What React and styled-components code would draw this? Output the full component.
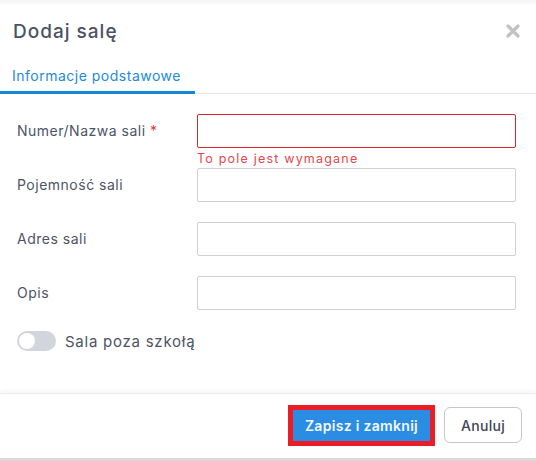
import React from 'react';
import styled, { createGlobalStyle } from 'styled-components';

const GlobalStyle = createGlobalStyle`
  html, body {
    margin: 0;
    padding: 0;
    background: #f4f4f6;
  }
  body {
    font-family: Inter, "Noto Sans", sans-serif;
  }
`;

const Page = styled.div`
  width: 536px;
  height: 461px;
  overflow: hidden;
  background: linear-gradient(#f5f5f5, #fbfbfb 4px);
  padding-top: 4px;
  box-sizing: border-box;
`;

const Modal = styled.div`
  background: #fff;
  height: 454px;
  display: flex;
  flex-direction: column;
  border-bottom: 3px solid #d9d9de;
`;

const Header = styled.div`
  display: flex;
  align-items: center;
  justify-content: space-between;
  padding: 14px 16px 0 13px;
  height: 26px;
`;

const Title = styled.h2`
  margin: 0;
  font-size: 19px;
  font-weight: 500;
  color: #4b5264;
  letter-spacing: 1px;
`;

const Close = styled.button`
  border: none;
  background: none;
  padding: 0;
  width: 14px;
  height: 14px;
  display: flex;
  cursor: pointer;
`;

const Tabs = styled.div`
  margin-top: 23px;
  display: flex;
  border-bottom: 1px solid #e6e6e8;
`;

const Tab = styled.div`
  box-sizing: border-box;
  width: 195px;
  padding: 0 0 7px 12px;
  white-space: nowrap;
  font-size: 14px;
  letter-spacing: 0.5px;
  color: ${p => (p.$active ? '#1d8bd8' : '#555')};
  border-bottom: 3px solid ${p => (p.$active ? '#1487d6' : 'transparent')};
  margin-bottom: -1px;
`;

const Form = styled.div`
  padding: 20px 20px 0 17px;
  display: flex;
  flex-direction: column;
  gap: 20px;
  flex: 1;
`;

const Row = styled.div`
  display: grid;
  grid-template-columns: 180px 1fr;
  align-items: start;
`;

const Label = styled.label`
  font-size: 14px;
  letter-spacing: 0.5px;
  color: #4d5466;
  line-height: 34px;
`;

const Star = styled.span`
  color: #e0383e;
`;

const Field = styled.div`
  display: flex;
  flex-direction: column;
`;

const Input = styled.input`
  box-sizing: border-box;
  height: 34px;
  width: 100%;
  border: 1px solid ${p => (p.$error ? '#d6262c' : '#cfd0d3')};
  border-radius: 2px;
  outline: none;
  background: #fff;
`;

const Error = styled.div`
  font-size: 12.5px;
  letter-spacing: 1.2px;
  color: #e5474c;
  margin-top: 3px;
  margin-bottom: -18px;
  line-height: 15px;
`;

const ToggleRow = styled.div`
  display: flex;
  align-items: center;
  gap: 9px;
  margin-top: 1px;
`;

const Switch = styled.div`
  width: 39px;
  height: 20px;
  border-radius: 10px;
  background: #d3d5dc;
  position: relative;
`;

const Knob = styled.div`
  position: absolute;
  top: 2px;
  left: 2px;
  width: 16px;
  height: 16px;
  border-radius: 50%;
  background: #fff;
`;

const ToggleLabel = styled.span`
  font-size: 15px;
  letter-spacing: 0.75px;
  color: #4d5466;
`;

const Footer = styled.div`
  height: 62px;
  border-top: 1px solid #ebebed;
  box-shadow: 0 -3px 4px rgba(0, 0, 0, 0.03);
  display: flex;
  align-items: center;
  justify-content: flex-end;
  gap: 9px;
  padding: 0 14px 2px 0;
`;

const Button = styled.button`
  box-sizing: border-box;
  font-family: inherit;
  font-size: 14px;
  letter-spacing: 0.3px;
  font-weight: ${p => (p.$primary ? 600 : 500)};
  height: ${p => (p.$primary ? '31px' : '36px')};
  width: ${p => (p.$primary ? '137px' : '78px')};
  padding: 0;
  border-radius: ${p => (p.$primary ? '0' : '6px')};
  border: ${p => (p.$primary ? 'none' : '1px solid #c5c7cc')};
  background: ${p => (p.$primary ? '#2a8ce2' : '#fff')};
  color: ${p => (p.$primary ? '#f4f8fd' : '#3f4553')};
  outline: ${p => (p.$primary ? '5px solid #ea1c26' : 'none')};
  margin-left: ${p => (p.$primary ? '5px' : '0')};
  margin-right: ${p => (p.$primary ? '5px' : '0')};
  cursor: pointer;
`;

export default function App() {
  return (
    <>
      <GlobalStyle />
      <Page>
        <Modal>
          <Header>
            <Title>Dodaj salę</Title>
            <Close aria-label="Zamknij">
              <svg width="14" height="14" viewBox="0 0 14 14">
                <path d="M2 2 L12 12 M12 2 L2 12" stroke="#c2c2c2" strokeWidth="3.2" strokeLinecap="round" />
              </svg>
            </Close>
          </Header>
          <Tabs>
            <Tab $active>Informacje podstawowe</Tab>
          </Tabs>
          <Form>
            <Row>
              <Label>Numer/Nazwa sali <Star>*</Star></Label>
              <Field>
                <Input $error />
                <Error>To pole jest wymagane</Error>
              </Field>
            </Row>
            <Row>
              <Label>Pojemność sali</Label>
              <Field><Input /></Field>
            </Row>
            <Row>
              <Label>Adres sali</Label>
              <Field><Input /></Field>
            </Row>
            <Row>
              <Label>Opis</Label>
              <Field><Input /></Field>
            </Row>
            <ToggleRow>
              <Switch><Knob /></Switch>
              <ToggleLabel>Sala poza szkołą</ToggleLabel>
            </ToggleRow>
          </Form>
          <Footer>
            <Button $primary>Zapisz i zamknij</Button>
            <Button>Anuluj</Button>
          </Footer>
        </Modal>
      </Page>
    </>
  );
}
